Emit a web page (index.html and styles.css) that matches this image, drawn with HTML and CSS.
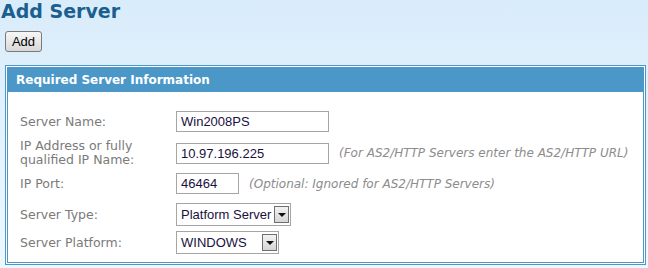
FILE: index.html
```html
<!DOCTYPE html>
<html lang="en">
  <head>
    <meta charset="UTF-8" />
    <meta name="viewport" content="width=device-width, initial-scale=1.0" />
    <title>Add Server</title>
    <link rel="stylesheet" href="styles.css">
  </head>
  <body>
    <h1>Add Server</h1>

    <button type="button" class="btn">Add</button>

    <div class="panel">
      <div class="panel-inner">
        <div class="panel-title">Required Server Information</div>

        <form class="form">
          <div class="row">
            <label for="name">Server Name:</label>
            <input type="text" id="name" class="field field-wide" value="Win2008PS" />
          </div>

          <div class="row">
            <label for="ip">IP Address or fully<br />qualified IP Name:</label>
            <input type="text" id="ip" class="field field-wide" value="10.97.196.225" />
            <span class="hint">(For AS2/HTTP Servers enter the AS2/HTTP URL)</span>
          </div>

          <div class="row">
            <label for="port">IP Port:</label>
            <input type="text" id="port" class="field field-short" value="46464" />
            <span class="hint">(Optional: Ignored for AS2/HTTP Servers)</span>
          </div>

          <div class="row">
            <label>Server Type:</label>
            <div class="select select-type">
              <span class="select-value">Platform Server</span>
              <span class="select-arrow"></span>
            </div>
          </div>

          <div class="row">
            <label>Server Platform:</label>
            <div class="select select-platform">
              <span class="select-value">WINDOWS</span>
              <span class="select-arrow"></span>
            </div>
          </div>
        </form>
      </div>
    </div>
  </body>
</html>
```

FILE: styles.css
```css
body {
  font-family: "DejaVu Sans", Verdana, sans-serif;
  margin: 0;
  padding: 0;
  height: 268px;
  overflow: hidden;
  background: linear-gradient(to bottom, #d9ecfb 0%, #e6f3fd 60%, #eef7fe 100%);
  color: #333;
}
h1 {
  margin: 0;
  padding: 0 0 0 1px;
  font-size: 19px;
  line-height: 22px;
  color: #1b5f8f;
  font-weight: bold;
}
.btn {
  display: block;
  margin: 9px 0 0 5px;
  width: 37px;
  height: 21px;
  padding: 0;
  border: 1px solid #7a7a7a;
  border-radius: 3px;
  background: linear-gradient(to bottom, #f6f6f6 0%, #e8e8e8 50%, #d8d8d8 100%);
  font-family: "Liberation Sans", Arial, sans-serif;
  font-size: 13px;
  color: #000;
}
.panel {
  margin: 13px 2px 0 5px;
  border: 1px solid #4a97c8;
  padding: 1px;
  background: #fff;
}
.panel-inner {
  border: 1px solid #4a97c8;
  background: #fff;
  padding-bottom: 8px;
}
.panel-title {
  background: #4a97c8;
  color: #fff;
  font-weight: bold;
  font-size: 12px;
  line-height: 24px;
  padding-left: 8px;
}
.form {
  padding: 19px 0 0 12px;
}
.row {
  display: flex;
  align-items: center;
  min-height: 21px;
}
.row:nth-child(1) {
  margin-bottom: 7px;
}
.row:nth-child(2) {
  margin-bottom: 6px;
}
.row:nth-child(3) {
  margin-bottom: 9px;
}
.row:nth-child(4) {
  margin-bottom: 5px;
}
.row label {
  width: 156px;
  flex: none;
  font-size: 12.5px;
  line-height: 14px;
  color: #7a7a7a;
}
.field {
  height: 21px;
  box-sizing: border-box;
  border: 1px solid #a5a5a5;
  padding: 0 4px;
  font-family: "Liberation Sans", Arial, sans-serif;
  font-size: 13px;
  color: #1a1040;
  background: #fff;
}
.field-wide {
  width: 153px;
}
.field-short {
  width: 63px;
}
.hint {
  margin-left: 10px;
  font-style: italic;
  font-size: 12px;
  color: #8c8c8c;
}
.select {
  display: flex;
  align-items: center;
  height: 23px;
  box-sizing: border-box;
  border: 1px solid #a5a5a5;
  padding: 2px 1px 2px 4px;
  background: #fff;
  font-family: "Liberation Sans", Arial, sans-serif;
  font-size: 13px;
  color: #1a1040;
}
.select-type {
  width: 115px;
}
.select-platform {
  width: 103px;
}
.select-value {
  flex: 1;
}
.select-arrow {
  position: relative;
  width: 15px;
  height: 17px;
  box-sizing: border-box;
  border: 1px solid #6f6f6f;
  background: linear-gradient(to bottom, #f2f2f2, #d6d6d6);
}
.select-arrow::after {
  content: "";
  position: absolute;
  left: 3px;
  top: 6px;
  border-left: 4px solid transparent;
  border-right: 4px solid transparent;
  border-top: 4px solid #111;
}
```
